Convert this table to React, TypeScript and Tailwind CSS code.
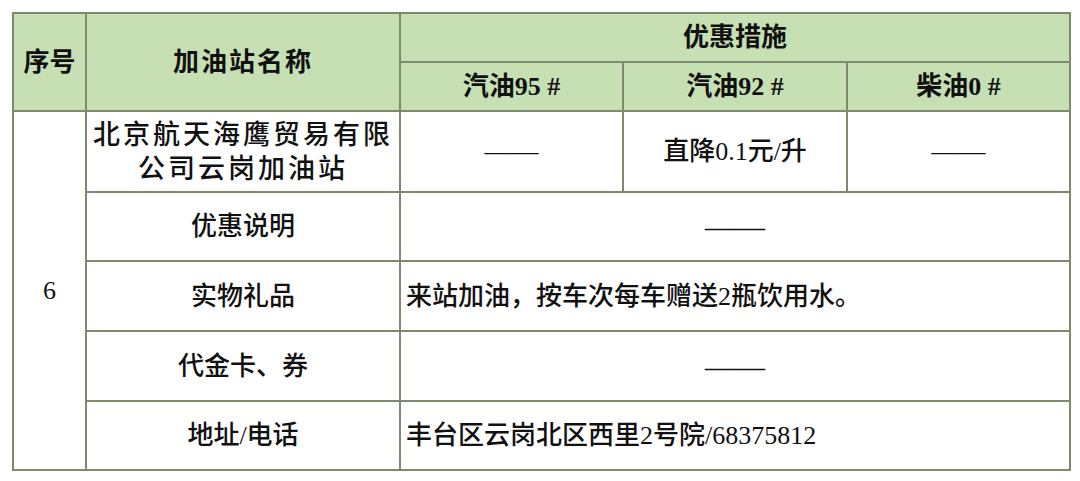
const font = "font-['Liberation_Serif','Noto_Sans_CJK_SC',serif]";

const cell = "border-2 border-[#7d8a6c] text-center align-middle p-0";
const head = `${cell} bg-[#c6e0b4] font-bold text-[26px]`;
const body = `${cell} bg-white font-medium text-[26px]`;

function Dash({ wide }: { wide?: boolean }) {
  return (
    <span className={`font-['Liberation_Serif',serif] font-normal ${wide ? "text-[30px]" : "text-[27px]"}`}>
      ——
    </span>
  );
}

export default function App() {
  return (
    <div className={`h-[481px] w-[1080px] bg-white pl-[12px] pt-[12px] text-[#111] ${font}`}>
      <table className="w-[1057px] table-fixed border-collapse">
        <colgroup>
          <col className="w-[73px]" />
          <col className="w-[314px]" />
          <col className="w-[223px]" />
          <col className="w-[224px]" />
          <col className="w-[223px]" />
        </colgroup>
        <tbody>
          <tr className="h-[49px]">
            <td rowSpan={2} className={head}>序号</td>
            <td rowSpan={2} className={`${head} tracking-[2px]`}>加油站名称</td>
            <td colSpan={3} className={head}>优惠措施</td>
          </tr>
          <tr className="h-[49px]">
            <td className={head}>汽油95 #</td>
            <td className={head}>汽油92 #</td>
            <td className={head}>柴油0 #</td>
          </tr>
          <tr className="h-[81px]">
            <td rowSpan={5} className={`${body} font-normal`}>6</td>
            <td className={`${body} font-bold text-[27px] leading-[34px] tracking-[3px]`}>
              北京航天海鹰贸易有限
              <br />
              公司云岗加油站
            </td>
            <td className={body}><Dash /></td>
            <td className={body}>直降0.1元/升</td>
            <td className={body}><Dash /></td>
          </tr>
          <tr className="h-[69px]">
            <td className={body}>优惠说明</td>
            <td colSpan={3} className={body}><Dash wide /></td>
          </tr>
          <tr className="h-[70px]">
            <td className={body}>实物礼品</td>
            <td colSpan={3} className={`${body} pl-[5px] text-left`}>
              来站加油，按车次每车赠送2瓶饮用水。
            </td>
          </tr>
          <tr className="h-[70px]">
            <td className={body}>代金卡、券</td>
            <td colSpan={3} className={body}><Dash wide /></td>
          </tr>
          <tr className="h-[69px]">
            <td className={body}>地址/电话</td>
            <td colSpan={3} className={`${body} pl-[5px] text-left`}>
              丰台区云岗北区西里2号院/68375812
            </td>
          </tr>
        </tbody>
      </table>
    </div>
  );
}
